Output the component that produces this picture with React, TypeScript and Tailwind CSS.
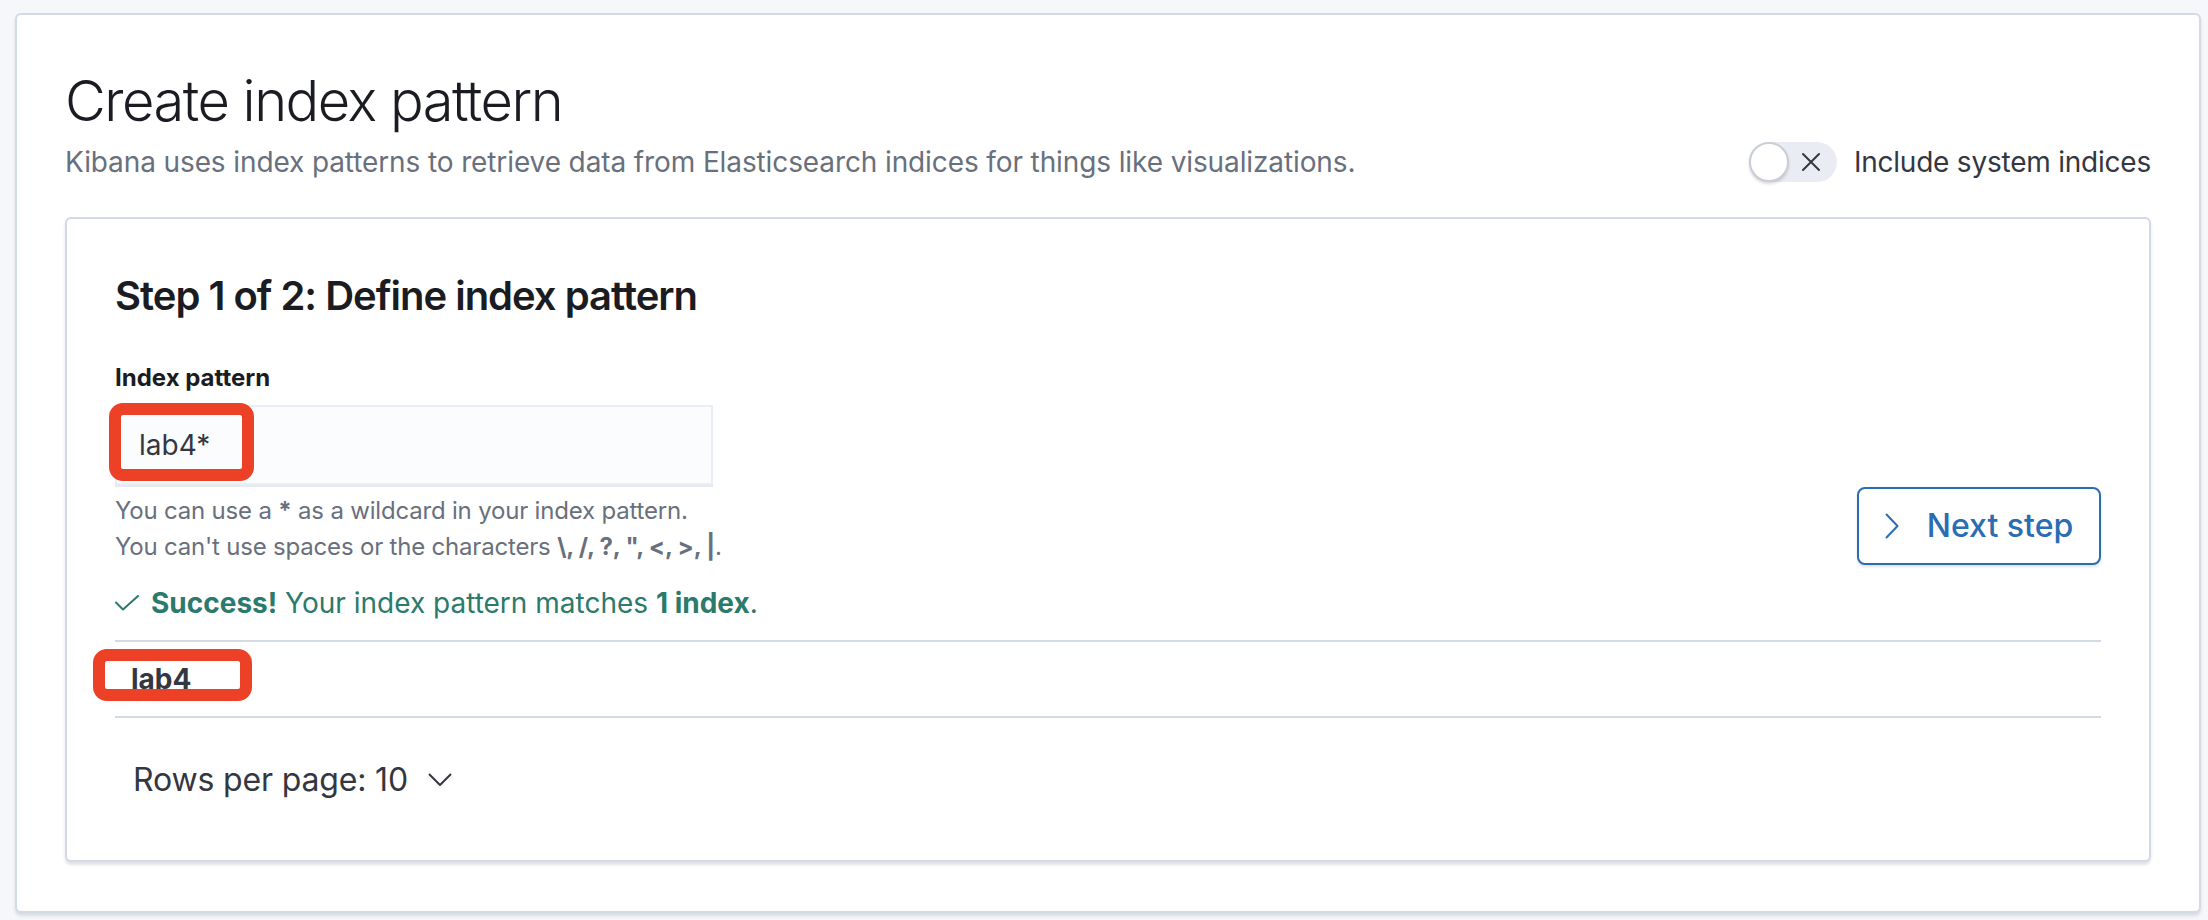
import React from 'react'

function CheckIcon() {
  return (
    <svg width="24" height="16" viewBox="0 0 24 16" fill="none" className="shrink-0">
      <path d="M1 7.5l7 7L23 1" stroke="#2b7a6c" strokeWidth="2" strokeLinecap="round" strokeLinejoin="round" />
    </svg>
  )
}

function SystemSwitch() {
  return (
    <div className="flex h-[40px] w-[88px] items-center rounded-full bg-[#e9edf3]">
      <div className="h-[40px] w-[40px] rounded-full border-2 border-[#c9ced6] bg-white shadow-[0_2px_3px_rgba(0,0,0,0.15)]" />
      <svg width="20" height="20" viewBox="0 0 20 20" fill="none" className="ml-[12px]">
        <path d="M2 2l16 16M18 2L2 18" stroke="#343741" strokeWidth="2" strokeLinecap="round" />
      </svg>
    </div>
  )
}

function Annotation({ className = '' }: { className?: string }) {
  return <div className={`pointer-events-none absolute rounded-[14px] border-[12px] border-[#ec4126] ${className}`} />
}

export default function App() {
  return (
    <div className="min-h-[920px] bg-[#f5f7fa] pb-[7px] pl-[15px] pr-[7px] pt-[13px] font-['Inter','Noto_Sans',sans-serif] text-[#343741]">
      <div className="rounded-[6px] border-2 border-[#d3dae6] bg-white px-[48px] pb-[49px] pt-[52px] shadow-[0_3px_3px_rgba(152,162,179,0.3)]">
        <h1 className="text-[56px] font-light leading-[68px] tracking-[-0.027em] text-[#1a1c21]">Create index pattern</h1>
        <div className="mt-[7px] flex h-[40px] items-center justify-between">
          <p className="text-[28px] leading-[40px] tracking-[-0.004em] text-[#69707d]">
            Kibana uses index patterns to retrieve data from Elasticsearch indices for things like visualizations.
          </p>
          <div className="flex items-center gap-[17px]">
            <SystemSwitch />
            <span className="text-[28px] leading-[40px] tracking-[-0.008em] text-[#343741]">Include system indices</span>
          </div>
        </div>

        <div className="mt-[35px] rounded-[6px] border-2 border-[#d3dae6] bg-white px-[48px] pb-[58px] pt-[53px] shadow-[0_3px_3px_rgba(152,162,179,0.3)]">
          <h2 className="text-[40px] font-semibold leading-[48px] tracking-[-0.025em] text-[#1a1c21]">Step 1 of 2: Define index pattern</h2>

          <div className="mt-[40px] flex items-end justify-between">
            <div>
              <label className="block text-[24px] font-bold leading-[36px] text-[#1a1c21]">Index pattern</label>
              <div className="relative mt-[9px]">
                <div className="flex h-[80px] w-[598px] items-center border-2 border-[#eaedf3] bg-[#fbfcfd] px-[22px] shadow-[0_2px_0_rgba(211,218,230,0.6)]">
                  <span className="text-[28px] leading-[40px] text-[#343741]">lab4*</span>
                </div>
                <Annotation className="-left-[6px] -top-[2px] h-[78px] w-[145px]" />
              </div>
              <div className="mt-[8px] text-[24px] leading-[36px] tracking-[-0.008em] text-[#69707d]">
                <p>
                  You can use a <b className="font-bold">*</b> as a wildcard in your index pattern.
                </p>
                <p>
                  You can't use spaces or the characters <b className="font-bold">{'\\, /, ?, ", <, >, |'}</b>.
                </p>
              </div>
            </div>
            <button className="flex h-[78px] w-[244px] items-center justify-center gap-[28px] rounded-[8px] border-2 border-[#2a6db2] bg-white text-[32px] font-medium text-[#2a6db2] shadow-[0_2px_3px_rgba(0,0,0,0.12)]">
              <svg width="14" height="26" viewBox="0 0 14 26" fill="none">
                <path d="M1.5 1.5L12.5 13L1.5 24.5" stroke="#2a6db2" strokeWidth="2" strokeLinecap="round" strokeLinejoin="round" />
              </svg>
              <span className="leading-[40px]">Next step</span>
            </button>
          </div>

          <div className="mt-[18px] flex items-center gap-[12px] text-[28px] leading-[40px] text-[#2b7a6c]">
            <CheckIcon />
            <p>
              <b className="font-bold">Success!</b> Your index pattern matches <b className="font-bold">1 index</b>.
            </p>
          </div>

          <div className="relative mt-[17px] flex h-[78px] items-center border-y-2 border-[#d3dae6] pl-[16px]">
            <span className="text-[28px] font-bold leading-[40px] text-[#343741]">lab4</span>
            <Annotation className="-left-[22px] top-[7px] h-[52px] w-[159px]" />
          </div>

          <div className="mt-[40px] flex items-center gap-[20px] pl-[18px]">
            <span className="text-[32px] leading-[44px] tracking-[-0.005em] text-[#343741]">Rows per page: 10</span>
            <svg width="24" height="14" viewBox="0 0 24 14" fill="none">
              <path d="M1.5 1.5L12 12L22.5 1.5" stroke="#343741" strokeWidth="2" strokeLinecap="round" strokeLinejoin="round" />
            </svg>
          </div>
        </div>
      </div>
    </div>
  )
}
